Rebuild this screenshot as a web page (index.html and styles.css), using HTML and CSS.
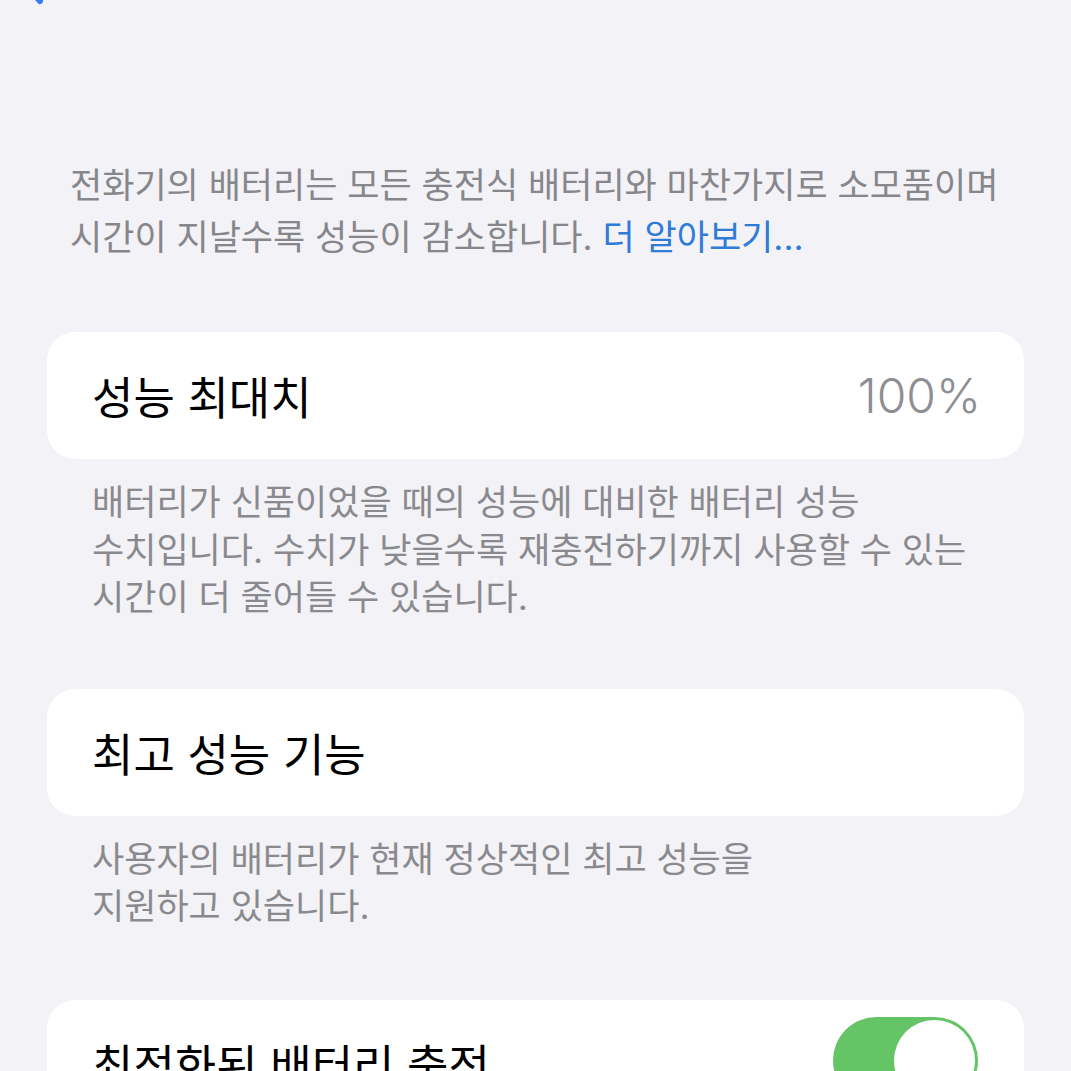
FILE: index.html
```html
<!DOCTYPE html>
<html lang="ko">
<head>
<meta charset="utf-8">
<title>배터리 성능 상태 및 충전</title>
<link rel="stylesheet" href="styles.css">
</head>
<body>
<header class="nav">
  <a class="nav-back">
    <svg class="chevron" width="30" height="50" viewBox="0 0 30 50"><path d="M24 4 L6 25 L24 46" fill="none" stroke="#2f7cf6" stroke-width="6" stroke-linecap="round" stroke-linejoin="round"/></svg>
    <span class="back-label">배터리</span>
  </a>
  <h1 class="nav-title">배터리 성능 상태 및 충전</h1>
</header>

<main class="content">
  <p class="intro">전화기의 배터리는 모든 충전식 배터리와 마찬가지로 소모품이며<br>시간이 지날수록 성능이 감소합니다. <a class="link">더 알아보기...</a></p>

  <section class="card">
    <span class="card-label">성능 최대치</span>
    <span class="card-value">100%</span>
  </section>
  <p class="note">배터리가 신품이었을 때의 성능에 대비한 배터리 성능<br>수치입니다. 수치가 낮을수록 재충전하기까지 사용할 수 있는<br>시간이 더 줄어들 수 있습니다.</p>

  <section class="card">
    <span class="card-label">최고 성능 기능</span>
  </section>
  <p class="note">사용자의 배터리가 현재 정상적인 최고 성능을<br>지원하고 있습니다.</p>

  <section class="card card-last">
    <span class="card-label">최적화된 배터리 충전</span>
    <span class="toggle"><span class="knob"></span></span>
  </section>
</main>
</body>
</html>
```

FILE: styles.css
```css
html, body {
  margin: 0;
  padding: 0;
  background: #f2f2f7;
  overflow: hidden;
}

body {
  font-family: Inter, "Noto Sans CJK KR", sans-serif;
  color: #000;
  height: 1071px;
}

/* navigation bar, scrolled mostly out of view */
.nav {
  display: flex;
  align-items: flex-end;
  height: 48px;
  margin-top: -43px;
  padding: 0 0 0 16px;
  position: relative;
}

.nav-back {
  display: flex;
  align-items: flex-end;
  gap: 22px;
  color: #2f7cf6;
}

.chevron {
  display: block;
}

.back-label {
  font-size: 40px;
  line-height: 48px;
  color: #2f7cf6;
}

.nav-title {
  position: absolute;
  left: 0;
  right: 0;
  bottom: 0;
  margin: 0;
  text-align: center;
  font-size: 36px;
  line-height: 48px;
  font-weight: 600;
}

.content {
  display: flex;
  flex-direction: column;
}

.intro {
  margin: 154px 0 0;
  padding: 0 60px 0 70px;
  font-size: 35px;
  line-height: 52px;
  color: #86868b;
  white-space: nowrap;
}

.link {
  color: #2f7bd8;
}

.card {
  display: flex;
  align-items: center;
  justify-content: space-between;
  height: 127px;
  margin: 69px 47px 0;
  padding: 0 43px 0 45px;
  background: #fff;
  border-radius: 28px;
}

.card-label {
  font-size: 45px;
}

.card-value {
  font-size: 48px;
  color: #8e8e93;
  font-weight: 300;
}

.note {
  margin: 20px 0 0;
  padding: 0 60px 0 92px;
  font-size: 35px;
  line-height: 47.5px;
  color: #8a8a8e;
  white-space: nowrap;
}

.note + .card {
  margin-top: 67px;
}

.note + .card-last {
  margin-top: 69px;
}

.card-last {
  padding-right: 46px;
}

.toggle {
  display: flex;
  justify-content: flex-end;
  align-items: center;
  width: 145px;
  height: 87px;
  padding: 0 3px;
  box-sizing: border-box;
  border-radius: 44px;
  background: #64c466;
  align-self: flex-start;
  margin-top: 17px;
}

.knob {
  width: 81px;
  height: 81px;
  border-radius: 50%;
  background: #fff;
}
```
